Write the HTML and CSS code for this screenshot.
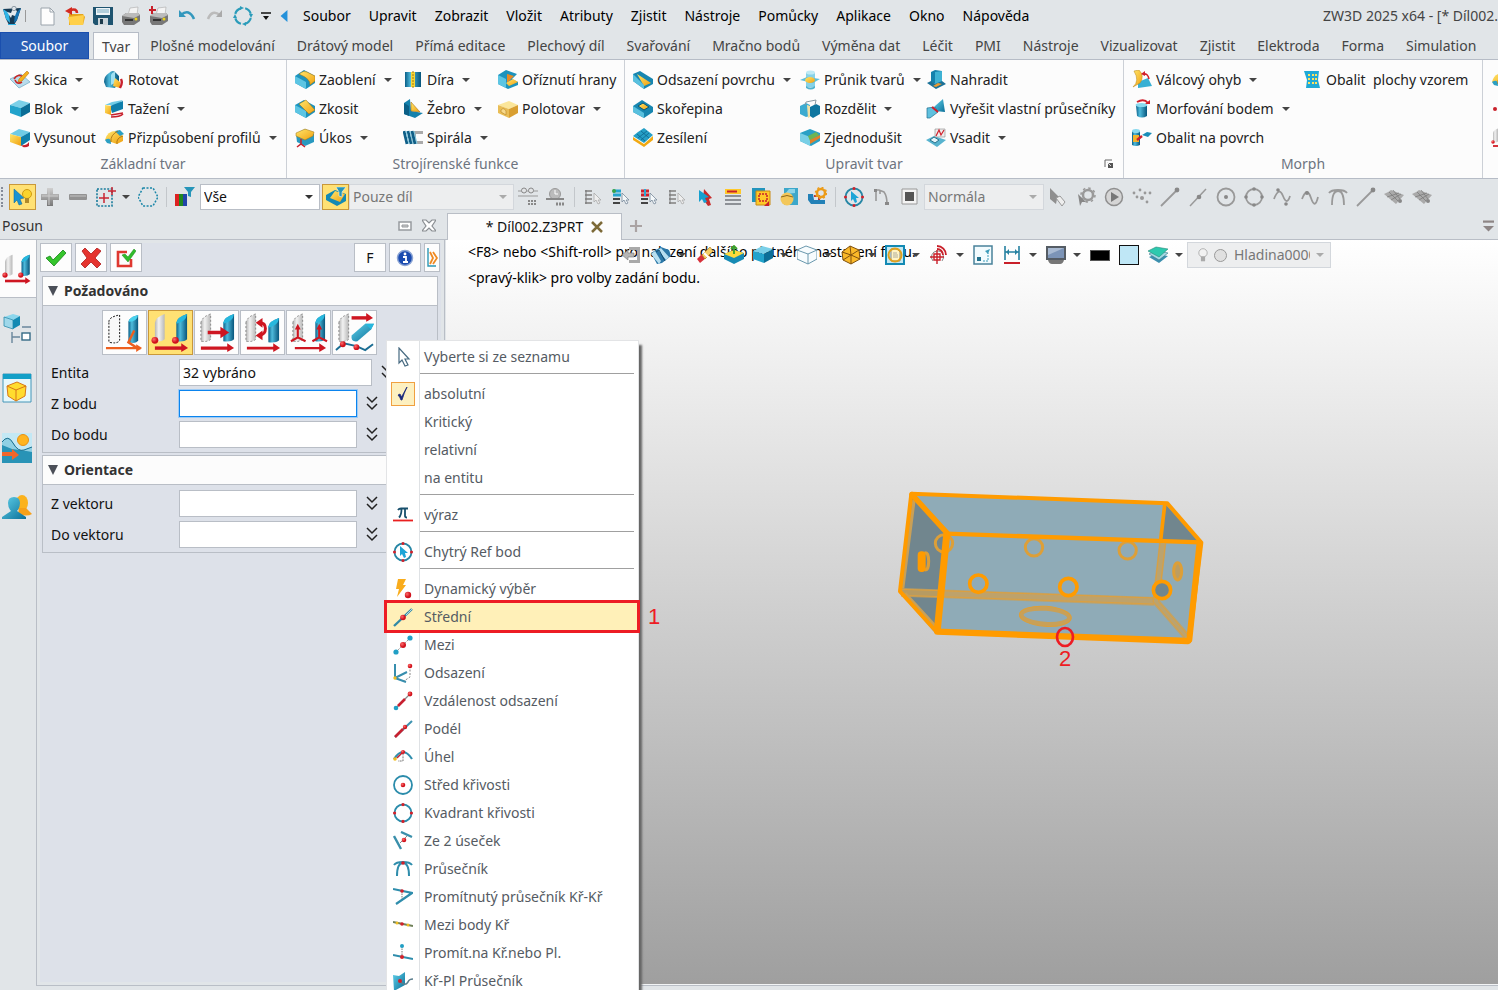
FILE: index.html
```html
<!DOCTYPE html>
<html lang="cs">
<head>
<meta charset="utf-8">
<title>ZW3D 2025 x64</title>
<link rel="stylesheet" href="styles.css">
</head>
<body>
<svg class="sprite" aria-hidden="true">
<defs>
<linearGradient id="gb" x1="0" y1="0" x2="1" y2="1"><stop offset="0" stop-color="#5fd0ea"/><stop offset="1" stop-color="#0b6f98"/></linearGradient>
<linearGradient id="gy" x1="0" y1="0" x2="1" y2="1"><stop offset="0" stop-color="#ffe66b"/><stop offset="1" stop-color="#f0a010"/></linearGradient>
<linearGradient id="gg" x1="0" y1="0" x2="1" y2="0"><stop offset="0" stop-color="#b5b5b5"/><stop offset=".4" stop-color="#f2f2f2"/><stop offset="1" stop-color="#b8b8b8"/></linearGradient>
<linearGradient id="gc" x1="0" y1="0" x2="1" y2="0"><stop offset="0" stop-color="#0a5f88"/><stop offset=".35" stop-color="#4fbbdc"/><stop offset="1" stop-color="#07557c"/></linearGradient>
<radialGradient id="gr" cx=".35" cy=".35" r=".8"><stop offset="0" stop-color="#ff6b6b"/><stop offset=".6" stop-color="#d0121c"/></radialGradient>
<linearGradient id="gk" x1="0" y1="0" x2="0" y2="1"><stop offset="0" stop-color="#d0d0d0"/><stop offset="1" stop-color="#777"/></linearGradient>

<symbol id="cube" viewBox="0 0 20 20"><path d="M0 6 9 1l11 3-9 5z" fill="#7bd0e8"/><path d="M0 6l11 3v9L0 14z" fill="#22a3cb"/><path d="M11 9l9-5v9l-9 5z" fill="#0b6e97"/></symbol>
<symbol id="extrude" viewBox="0 0 20 20"><path d="M0 6 9 1l11 3-9 5z" fill="#6fcbe6"/><path d="M0 6l11 3v9L0 14z" fill="url(#gy)"/><path d="M11 9l9-5v8l-9 6z" fill="#0f7fab"/><path d="M11 17q5 1 8-3v4q-3 2-6 1z" fill="#c8202c"/></symbol>
<symbol id="sketch" viewBox="0 0 20 20"><path d="M0 9l11-5 9 8-11 6z" fill="#b9dcec" stroke="#6fa9c4" stroke-width=".7"/><path d="M4 9q4-6 9-2M5 10q2 5 7 2" stroke="#c22" stroke-width="1.6" fill="none"/><path d="M9 9l8-8 2 2-7 8-4 1z" fill="#f5b01a" stroke="#a8650c" stroke-width=".5"/></symbol>
<symbol id="revolve" viewBox="0 0 20 20"><path d="M5 3q4-4 7 0l3 3v5l-4 7-9-1-2-5q0-6 5-9z" fill="url(#gc)"/><path d="M7 5q1-3 4-3v11l-4 2z" fill="#9fe0f2"/><path d="M11 8l5 4v6l-7-2z" fill="url(#gy)"/><path d="M17 9q2 4-1 9" stroke="#c8202c" stroke-width="2.4" fill="none"/></symbol>
<symbol id="sweep" viewBox="0 0 20 20"><path d="M1 6l7-3 11-2-6 5z" fill="#6fcbe6"/><path d="M6 7l13-5v8L8 14z" fill="#0f7fab"/><path d="M1 6l6 1v9l-6-2z" fill="url(#gy)"/><path d="M7 18q9 0 12-3M7 16l12-2" stroke="#c8202c" stroke-width="1.6" fill="none"/></symbol>
<symbol id="loft" viewBox="0 0 20 20"><path d="M1 12Q3 3 12 3l7 5v5l-6 3-6-2z" fill="url(#gy)"/><path d="M1 12q6-4 6 4l-4-1zM11 3l5-1 4 4-4 2z" fill="#2b9fc3"/><path d="M7 14q-1-7 7-11M13 16q-1-6 6-8" stroke="#a06a10" stroke-width=".8" fill="none"/></symbol>
<symbol id="fillet" viewBox="0 0 20 20"><path d="M0 6 9 0l11 6v7l-9 6-11-6z" fill="#1d93bd"/><path d="M0 6l11 6v7L0 13z" fill="#5cc5e3"/><path d="M4 4q5-4 8-2l8 4v5l-5 4q1-6-11-11z" fill="url(#gy)" stroke="#9c7312" stroke-width=".5"/></symbol>
<symbol id="chamfer" viewBox="0 0 20 20"><path d="M0 6 9 1l11 6v6l-9 6-11-6z" fill="#1d93bd"/><path d="M0 6l11 6v7L0 13z" fill="#5cc5e3"/><path d="M4 5l7-4 9 10-6 4z" fill="url(#gy)" stroke="#9c7312" stroke-width=".5"/></symbol>
<symbol id="draft" viewBox="0 0 20 20"><path d="M1 6l9-5 9 5v8l-9 4-8-4z" fill="#2899c0"/><path d="M1 5l9-4 9 3-1 4-8 4-9-4z" fill="url(#gy)" stroke="#9c7312" stroke-width=".5"/><path d="M6 11v5M2 19l4-3 4 3" stroke="#c8202c" stroke-width="1.5" fill="none"/></symbol>
<symbol id="hole" viewBox="0 0 20 20"><path d="M2 2h6v15H2zM12 2h6v15h-6z" fill="url(#gc)"/><path d="M8 2h4v15H8z" fill="#f7d537"/><path d="M10 1v17" stroke="#a07a12" stroke-dasharray="2 1"/></symbol>
<symbol id="rib" viewBox="0 0 20 20"><path d="M1 4l6-4 1 12 12 2-8 5L1 15z" fill="#1481ac"/><path d="M8 3l9 10-9-1z" fill="url(#gy)" stroke="#9a640e" stroke-width=".5"/><path d="M1 4l5 3v10l-5-2z" fill="#0b5f86"/></symbol>
<symbol id="thread" viewBox="0 0 20 20"><path d="M8 3h12v3h-7v7h7v3H8z" fill="#aaa"/><path d="M1 3l3 13M5 3l3 13M9 3l3 13" stroke="#0f5f88" stroke-width="2.8"/><path d="M3 3l3 13M7 3l3 13M11 3l3 13" stroke="#7fc7de" stroke-width="1"/></symbol>
<symbol id="trimedge" viewBox="0 0 20 20"><path d="M0 5 8 0l11 4-5 5 6 3v3l-10 4-10-5z" fill="#1d93bd"/><path d="M0 5l8 4v9l-8-4z" fill="#5cc5e3"/><path d="M9 4l7 2-5 5-2 2z" fill="#e98a24"/><path d="M8 13l7-4 5 3-9 4z" fill="url(#gy)"/></symbol>
<symbol id="stock" viewBox="0 0 20 20"><path d="M0 6l11-4 9 4-9 4z" fill="#fbe69a"/><path d="M0 6l11 4v9L0 14z" fill="#e9bd55"/><path d="M11 10l9-4v8l-9 5z" fill="#d99f31"/><path d="M3 13v-2q3-3 5 1v4z" fill="#f7d98a" stroke="#b68527" stroke-width=".6"/></symbol>
<symbol id="offset" viewBox="0 0 20 20"><path d="M0 4l7-3 13 8v5l-9 5L0 11z" fill="#1886b0"/><path d="M4 4l14 9-7 3z" fill="url(#gy)"/><path d="M0 4l11 11v4L0 11z" fill="#59c0de"/></symbol>
<symbol id="shell" viewBox="0 0 20 20"><path d="M0 7l9-6 11 7v5l-9 6-11-6z" fill="#1886b0"/><path d="M0 7l11 7v5L0 13z" fill="#59c0de"/><path d="M5 7l5-3 6 4-5 3z" fill="url(#gy)" stroke="#075777"/></symbol>
<symbol id="thicken" viewBox="0 0 20 20"><path d="M0 9l11 7 9-8v4l-9 7-11-7z" fill="#f2a912"/><path d="M0 8l5-4 6-4 9 7-9 8z" fill="#259fc6"/><path d="M4 6l8 7M8 3l8 7M5 10l9-7M8 12l8-7" stroke="#0b5f86" stroke-width=".7"/></symbol>
<symbol id="combine" viewBox="0 0 20 20"><path d="M6 3h9v14H6z" fill="#86d2e8"/><ellipse cx="10.500" cy="2.500" rx="4.500" ry="2" fill="#bfeaf5"/><path d="M0 10l7-3 13 2-7 4z" fill="#5dbedb"/><ellipse cx="10" cy="10" rx="5" ry="3" fill="url(#gy)"/><path d="M6 16q4 3 9 0v2q-4 3-9 0z" fill="#4fb2cf"/></symbol>
<symbol id="divide" viewBox="0 0 20 20"><path d="M0 7l6-3 4 2v11l-4 1-6-3z" fill="#3cabd0"/><path d="M10 8l6-3 4 2v8l-7 4-3-2z" fill="#0f76a0"/><path d="M5 6l1-3 10-2-1 5" fill="none" stroke="#8b9aa3"/><path d="M7 6l3 1v11l-2 1z" fill="#f1e0a4"/></symbol>
<symbol id="simplify" viewBox="0 0 20 20"><path d="M0 5l10-4 10 4v8l-9 5-11-5z" fill="#2aa0c5"/><path d="M0 5l10 4v9L0 13z" fill="#79cfe6"/><path d="M8 8l8-4 3 3-9 6z" fill="#6db553"/><path d="M10 12l10-5v3l-10 6z" fill="#e0812a"/></symbol>
<symbol id="replace" viewBox="0 0 20 20"><path d="M5 2l4-2 7 1v11l-7 2-4-2z" fill="#1481ac"/><path d="M9 2l7-1v11l-7 2z" fill="#3eb2d4"/><path d="M1 13l4-2 4 3 7-3 4 3-10 5z" fill="#1a7198"/><path d="M7 16l5-3 4 1-6 3z" fill="#e99a32"/></symbol>
<symbol id="selfx" viewBox="0 0 20 20"><path d="M9 7l8-7 2 13-10-1z" fill="url(#gb)"/><path d="M1 9l8-1 3 5-8 6H1z" fill="#5fc0de" stroke="#216e8f" stroke-width=".7"/><path d="M6 8l6 5" stroke="#d11f2b" stroke-width="2"/></symbol>
<symbol id="emboss" viewBox="0 0 20 20"><path d="M0 12l8-4 12 4-9 7z" fill="#57b3cf"/><path d="M4 12l4-3 5 3-4 3z" fill="#e4f4f9" stroke="#28728d"/><path d="M9 1h10v8H9z" fill="#eee" stroke="#888" stroke-width=".6"/><path d="M10 8l3-6 2 5 3-5" fill="none" stroke="#d11f2b" stroke-width="1.2"/></symbol>
<symbol id="bend" viewBox="0 0 20 20"><path d="M6 12l10-4 4 8-14 2z" fill="#38b0d4"/><path d="M2 1l5-1q6 6 1 13l-7 4q7-6 1-16z" fill="url(#gy)" stroke="#b98210" stroke-width=".5"/><path d="M11 4q5-1 6 5" fill="none" stroke="#d11f2b" stroke-width="1.6"/><path d="M9 4l4-3v5z" fill="#d11f2b"/></symbol>
<symbol id="morph" viewBox="0 0 20 20"><path d="M4 6h11v11q-5 3-10 0z" fill="url(#gc)"/><ellipse cx="9.500" cy="6" rx="6" ry="2" fill="#8ad9ee"/><path d="M5 3q7-4 11 1" fill="none" stroke="#d11f2b" stroke-width="2"/><path d="M13 5h5V1z" fill="#d11f2b"/></symbol>
<symbol id="wrap" viewBox="0 0 20 20"><path d="M0 3h8v14q-4 2-8 0z" fill="url(#gc)"/><ellipse cx="4" cy="3" rx="4" ry="2" fill="#8ad9ee"/><path d="M1 7h6v7H1z" fill="#f2b32d"/><path d="M5 12l5-4" stroke="#d11f2b" stroke-width="2.4"/><path d="M10 7l5-3 5 1-4 4z" fill="#1a8db8"/></symbol>
<symbol id="pattern" viewBox="0 0 20 20"><path d="M2 1h15l-1 9 2 8H4l1-8z" fill="#1fa9d6"/><path d="M6 4h2v2H6zM10 4h2v2h-2zM13 4h2v2h-2zM6 8h2v2H6zM10 8h2v2h-2zM13 8h2v2h-2zM6 12h2v2H6zM10 12h2v2h-2zM13 12h2v2h-2z" fill="#ffe25e"/></symbol>

<symbol id="logo" viewBox="0 0 20 20"><path d="M1 3l18-1-4 12-3 5H7l-3-6z" fill="#163a55"/><path d="M1 3l6 4 1 10-4-4z" fill="#2fb4e6"/><path d="M19 2l-6 6-1 9 3-3z" fill="#1674b4"/><path d="M5 6l4 1 2-5 4 3-2 5-3-1-1 3z" fill="#e4eaee"/><circle cx="12" cy="2.500" r="2.200" fill="#dde3e8" stroke="#5b6c78" stroke-width=".6"/><path d="M6 18h8v1H6z" fill="#2fb4e6"/></symbol>
<symbol id="new" viewBox="0 0 20 20"><path d="M4 2h9l4 4v13H4z" fill="#fdfdfd" stroke="#9aa3ab"/><path d="M13 2v4h4" fill="none" stroke="#9aa3ab"/></symbol>
<symbol id="open" viewBox="0 0 20 20"><path d="M4 8h14l2 3-2 8H4z" fill="#e5a51c"/><path d="M3 11l16-2-1 10H5z" fill="#ffd04a"/><path d="M12 7Q12 2 5 4" fill="none" stroke="#d32a20" stroke-width="2.6"/><path d="M0 5l7-4v8z" fill="#d32a20"/></symbol>
<symbol id="save" viewBox="0 0 20 20"><path d="M0 1h20v18H2l-2-2z" fill="#1f5470"/><path d="M3 2h14v7H3z" fill="#eef4f7"/><path d="M4 4h12M4 6h12" stroke="#76a9bf"/><path d="M5 12h10v7H5z" fill="#ccd5da"/><path d="M7 13h3v5H7z" fill="#1c394a"/></symbol>
<symbol id="print" viewBox="0 0 20 20"><path d="M7 9l2-7 8-1-1 8z" fill="#f3f3f3" stroke="#aaa" stroke-width=".6"/><path d="M1 10l4-3h12l2 2v6l-6 4H3l-2-3z" fill="#777"/><path d="M1 10l4-3h12l2 2-6 3z" fill="#bbb"/><path d="M4 14h8" stroke="#333" stroke-width="2"/><circle cx="15" cy="13" r="1.5" fill="#e9d21c"/></symbol>
<symbol id="undo" viewBox="0 0 20 20"><path d="M4 9q8-7 13 4" fill="none" stroke="#3498bd" stroke-width="2.6"/><path d="M2 4v7h7z" fill="#3498bd"/></symbol>
<symbol id="redo" viewBox="0 0 20 20"><path d="M15 9Q7 3 3 13" fill="none" stroke="#bbb" stroke-width="2.6"/><path d="M17 4v7h-6z" fill="#aaa"/></symbol>
<symbol id="regen" viewBox="0 0 20 20"><circle cx="10" cy="10" r="8" fill="none" stroke="#2b9cba" stroke-width="2.200" stroke-dasharray="8 4.566" stroke-dashoffset="-2"/><path d="M7 0v4l4-2zM20 8h-4l2 4zM13 20v-4l-4 2zM0 12h4l-2-4z" fill="#2b9cba"/></symbol>

<symbol id="pick" viewBox="0 0 20 20"><path d="M1 2l10 9-4 1 2 5-3 1-2-5-3 3z" fill="#1993d2" stroke="#0b6595" stroke-width=".5"/><circle cx="14" cy="7" r="4.500" fill="#fbd42c" stroke="#d09a12"/><path d="M12 11h4v5h-4z" fill="#b08a2a"/></symbol>
<symbol id="plus" viewBox="0 0 20 20"><path d="M7 1h6v6h6v6h-6v6H7v-6H1V7h6z" fill="url(#gk)"/><path d="M9 2v16M2 9h16" stroke="#ccc"/></symbol>
<symbol id="minus" viewBox="0 0 20 20"><rect x="1" y="7" width="18" height="6" rx="1" fill="#929292"/><path d="M2 9h16" stroke="#c4c4c4"/></symbol>
<symbol id="boxsel" viewBox="0 0 20 20"><path d="M1 2h15v17H1z" fill="none" stroke="#1a7c9c" stroke-width="1.6" stroke-dasharray="2 1.4"/><path d="M8 6v10M3 11h10M16 0v8M12 4h8" stroke="#c92530" stroke-width="1.5"/></symbol>
<symbol id="polysel" viewBox="0 0 20 20"><path d="M5 1h10l5 9-5 9H5L0 10z" fill="none" stroke="#1a86a8" stroke-width="1.5" stroke-dasharray="2 1.5"/></symbol>
<symbol id="colorfilter" viewBox="0 0 20 20"><path d="M0 7h4v12H0z" fill="#d22"/><path d="M4 7h4v12H4z" fill="#282"/><path d="M8 7h4v12H8z" fill="#24a"/><path d="M9 0h11l-4 5v5l-3-1V5z" fill="#2695b9"/></symbol>
<symbol id="partfilter" viewBox="0 0 20 20"><path d="M0 8l9-5 11 4v7l-9 5-11-6z" fill="#148ab4"/><path d="M4 11l5-7 10 3-5 8z" fill="url(#gy)"/><path d="M10 0h10l-4 5v5l-3-1V5z" fill="#2695b9" stroke="#fff" stroke-width=".5"/></symbol>
<symbol id="gear1" viewBox="0 0 20 20"><path d="M0 4h20M0 9h20" stroke="#999"/><circle cx="6" cy="3.500" r="2.500" fill="#e2e4e6" stroke="#888"/><circle cx="13" cy="3.500" r="2.500" fill="#e2e4e6" stroke="#888"/><path d="M10 14h9M10 17h9" stroke="#888" stroke-width="2" stroke-dasharray="2 1"/></symbol>
<symbol id="gear2" viewBox="0 0 20 20"><circle cx="9" cy="7" r="5.500" fill="#bbb" stroke="#999"/><path d="M9 3v4h3" stroke="#fff" fill="none"/><path d="M0 12h18" stroke="#888" stroke-width="2"/><path d="M10 17h9" stroke="#888" stroke-width="3" stroke-dasharray="2 1"/></symbol>
<symbol id="list0" viewBox="0 0 20 20"><path d="M2 4h7M2 8h7M2 12h7M2 16h7" stroke="#999" stroke-width="2"/><path d="M3 3v14" stroke="#777"/><path d="M11 6v9l2-2 2 4 2-1-2-3h3z" fill="#eee" stroke="#aaa" stroke-width=".8"/></symbol>
<symbol id="list1" viewBox="0 0 20 20"><path d="M2 4h8M2 8h8" stroke="#25a5cf" stroke-width="3"/><path d="M2 12h7M2 16h7" stroke="#444" stroke-width="2"/><circle cx="3" cy="4" r="2" fill="#39a54a"/><path d="M11 6v9l2-2 2 4 2-1-2-3h3z" fill="#f4f8fa" stroke="#789" stroke-width=".8"/></symbol>
<symbol id="list2" viewBox="0 0 20 20"><path d="M2 4h8M2 8h8" stroke="#d1202a" stroke-width="3"/><path d="M2 12h7M2 16h7" stroke="#444" stroke-width="2"/><path d="M6 2v7" stroke="#2aaad5" stroke-width="2"/><path d="M11 6v9l2-2 2 4 2-1-2-3h3z" fill="#f4f8fa" stroke="#789" stroke-width=".8"/></symbol>
<symbol id="cursors" viewBox="0 0 20 20"><path d="M9 2l8 9-3 1 2 6-3 1-5-7z" fill="#c82a2a"/><path d="M4 3v12l3-3 2 4 3-1-2-4 4-1z" fill="#16a0cf"/></symbol>
<symbol id="table" viewBox="0 0 20 20"><path d="M2 2h16v5H2z" fill="#ffc928"/><path d="M4 4.500h10" stroke="#c9202a" stroke-width="2"/><path d="M2 9h16M2 13h16M2 17h16" stroke="#8d9196" stroke-width="2"/></symbol>
<symbol id="layersel" viewBox="0 0 20 20"><path d="M1 1h13v14H1z" fill="#2294bc"/><path d="M5 4h14v14H5z" fill="#ffc928" stroke="#c98a12"/><path d="M8 7h8v7H8z" fill="none" stroke="#c9202a" stroke-width="1.500" stroke-dasharray="2 1"/><path d="M18 14v5h-5z" fill="#c9202a"/></symbol>
<symbol id="globe" viewBox="0 0 20 20"><path d="M5 1h14v17H5z" fill="#3ca7ca"/><path d="M6 7l4-5h6v4" fill="#8bd4e8"/><circle cx="8" cy="12" r="6.500" fill="#f3c75a"/><path d="M2 10q6-3 12 0" stroke="#8d681d" fill="none"/></symbol>
<symbol id="bendset" viewBox="0 0 20 20"><path d="M1 7h5l1 6h11v4H4l-3-4z" fill="#2281b7"/><path d="M7 9h5v4" stroke="#b8343a" stroke-width="2" fill="none"/><circle cx="14" cy="6" r="4" fill="none" stroke="#ec9b17" stroke-width="2.500"/><circle cx="14" cy="6" r="5.500" fill="none" stroke="#ec9b17" stroke-width="1.500" stroke-dasharray="2 2.300"/></symbol>
<symbol id="refpt" viewBox="0 0 20 20"><circle cx="10" cy="10" r="8.500" fill="none" stroke="#2686a5" stroke-width="1.800"/><path d="M7 4v10l2-2 2 4 2-1-1-4h3z" fill="#1ca5d7"/><g fill="#d3202a"><circle cx="10" cy="1.500" r="1.500"/><circle cx="10" cy="18.500" r="1.500"/><circle cx="1.500" cy="10" r="1.500"/><circle cx="18.500" cy="10" r="1.500"/></g></symbol>
<symbol id="hook" viewBox="0 0 20 20"><path d="M4 14V3h3l5 2q3 4 3 12M8 3v4" fill="none" stroke="#999" stroke-width="1.600"/><path d="M2 2h3v3H2zM13 15h4v3h-4z" fill="#888"/></symbol>
<symbol id="square" viewBox="0 0 20 20"><path d="M2 2h15v15H2z" fill="#f3f3f3" stroke="#999"/><path d="M5 5h9v9H5z" fill="#555"/></symbol>
<symbol id="curtag" viewBox="0 0 20 20"><path d="M2 1l11 11H9l-1 5-6-5z" fill="#8f8f8f"/><path d="M8 11l4-2 5 6-3 4z" fill="#eee" stroke="#999"/></symbol>
<symbol id="curgear" viewBox="0 0 20 20"><circle cx="12" cy="8" r="5" fill="none" stroke="#999" stroke-width="2.500"/><circle cx="12" cy="8" r="7" fill="none" stroke="#999" stroke-width="1.500" stroke-dasharray="2.500 3"/><path d="M2 7l8 8H6l-2 4z" fill="#888"/></symbol>
<symbol id="play" viewBox="0 0 20 20"><circle cx="10" cy="10" r="8.500" fill="#d5d5d5" stroke="#8f8f8f" stroke-width="1.500"/><path d="M7 5l8 5-8 5z" fill="#777"/></symbol>
<symbol id="dots" viewBox="0 0 20 20" fill="#999"><circle cx="2" cy="6" r="1.400"/><circle cx="8" cy="3" r="1.400"/><circle cx="5" cy="10" r="1.400"/><circle cx="10" cy="11" r="2"/><circle cx="13" cy="6" r="1.400"/><circle cx="18" cy="6" r="1.400"/><circle cx="15" cy="15" r="1.400"/></symbol>
<symbol id="gline" viewBox="0 0 20 20"><path d="M1 19L17 3" stroke="#999" stroke-width="1.800"/><circle cx="17" cy="3" r="2.400" fill="#888"/></symbol>
<symbol id="gmid" viewBox="0 0 20 20"><path d="M2 19L18 2" stroke="#999" stroke-width="1.500"/><circle cx="11" cy="10" r="2.300" fill="#888"/></symbol>
<symbol id="gcen" viewBox="0 0 20 20"><circle cx="10" cy="10" r="8.500" fill="none" stroke="#999" stroke-width="1.800"/><circle cx="10" cy="10" r="2" fill="#888"/></symbol>
<symbol id="gquad" viewBox="0 0 20 20"><circle cx="10" cy="10" r="8" fill="none" stroke="#999" stroke-width="1.800"/><g fill="#888"><circle cx="10" cy="2" r="1.800"/><circle cx="10" cy="18" r="1.800"/><circle cx="2" cy="10" r="1.800"/><circle cx="18" cy="10" r="1.800"/></g></symbol>
<symbol id="gwave" viewBox="0 0 20 20"><path d="M2 12Q7-1 11 9t7 0" fill="none" stroke="#999" stroke-width="1.800"/><circle cx="6" cy="3" r="1.800" fill="#888"/><circle cx="14" cy="17" r="1.800" fill="#888"/></symbol>
<symbol id="gwave2" viewBox="0 0 20 20"><path d="M2 12Q7-1 11 11t7-1" fill="none" stroke="#999" stroke-width="1.800"/><circle cx="7" cy="6" r="2" fill="#888"/></symbol>
<symbol id="gint" viewBox="0 0 20 20"><path d="M1 6q2-3 9-3t9 3M4 18Q4 4 10 4t6 14" fill="none" stroke="#999" stroke-width="1.800"/></symbol>
<symbol id="gsurf" viewBox="0 0 20 20"><path d="M0 7q5-2 7-4l13 5-8 9z" fill="#aaa"/><path d="M5 5l9 9M9 3l7 9M3 10l12-4M7 13l10-6" stroke="#777" stroke-width=".7"/><circle cx="16" cy="14" r="2" fill="#888"/></symbol>

<symbol id="mvA" viewBox="0 0 40 40"><path d="M4 9q0-5 11-7v26q-2 4-11 2z" fill="#f8f8f8" stroke="#111" stroke-dasharray="2 1.500"/><path d="M24 9q1-5 10-7v26q-2 4-10 2z" fill="url(#gc)"/><path d="M24 9q1-5 10-7-1 7-10 7z" fill="#48d1ee"/><path d="M1 36h32l-9-6 6-12" fill="none" stroke="#ed5f1e" stroke-width="2.500"/><path d="M32 32l6 4-6 4z" fill="#ed5f1e"/></symbol>
<symbol id="mvB" viewBox="0 0 40 40"><path d="M4 10q1-6 10-9v26q-3 3-10 2z" fill="url(#gg)"/><path d="M26 10q1-6 11-9v26q-3 3-11 2z" fill="url(#gc)"/><path d="M26 10q1-6 11-9-1 8-11 10z" fill="#27b7dd"/><circle cx="4" cy="28" r="3.500" fill="url(#gr)"/><circle cx="25" cy="28" r="3.500" fill="url(#gr)"/><path d="M4 36h29" stroke="#ce1621" stroke-width="3.500"/><path d="M31 31l7 5-7 4z" fill="#ce1621"/></symbol>
<symbol id="mvC" viewBox="0 0 40 40"><path d="M4 10q1-6 10-9v26q-3 3-10 2z" fill="url(#gg)" stroke="#888" stroke-dasharray="2 2"/><path d="M27 10q1-6 11-9v26q-3 3-11 2z" fill="url(#gc)"/><path d="M27 10q1-6 11-9-1 8-11 10z" fill="#27b7dd"/><path d="M11 20h15M4 36h29" stroke="#ce1621" stroke-width="3.500"/><path d="M24 14l9 6-9 6zM31 31l7 5-7 4z" fill="#ce1621"/></symbol>
<symbol id="mvD" viewBox="0 0 40 40"><path d="M3 10q1-6 10-9v26q-3 3-10 2z" fill="url(#gg)" stroke="#888" stroke-dasharray="2 2"/><path d="M26 14q1-6 11-9v23q-3 3-11 2z" fill="url(#gc)"/><path d="M26 14q1-6 11-9-1 8-11 10z" fill="#27b7dd"/><path d="M17 10q6 0 6 6t-6 7M4 36h29" stroke="#ce1621" stroke-width="3" fill="none"/><path d="M20 5v10l-7-5zM20 18v10l-7-5zM31 31l7 5-7 4z" fill="#ce1621"/></symbol>
<symbol id="mvE" viewBox="0 0 40 40"><path d="M4 10q1-6 10-9v26q-3 3-10 2z" fill="url(#gg)" stroke="#888" stroke-dasharray="2 2"/><path d="M27 10q1-6 10-9v26q-3 3-10 2z" fill="url(#gc)"/><path d="M27 10q1-6 10-9-1 8-10 10z" fill="#27b7dd"/><path d="M9 14v11l-7 4M9 25l8 4M31 14v11l-7 4M31 25l8 4M6 36h27" stroke="#ce1621" stroke-width="2.200" fill="none"/><path d="M6 17l3-6 3 6zM28 17l3-6 3 6zM31 31l7 5-7 4z" fill="#ce1621"/></symbol>
<symbol id="mvF" viewBox="0 0 40 40"><path d="M4 10q1-6 10-9v26q-3 3-10 2z" fill="url(#gg)" stroke="#888" stroke-dasharray="2 2"/><path d="M17 23l14-12 9 0-3 6-14 12q-7 1-6-6z" fill="url(#gb)"/><path d="M31 11h9l-3 6z" fill="#27b7dd"/><path d="M17 5h16" stroke="#ce1621" stroke-width="3.500"/><path d="M32 0l7 5-7 4z" fill="#ce1621"/><path d="M1 38l8-7 13 3 9 4 8-6" stroke="#1b6d93" stroke-width="2" fill="none"/><circle cx="8" cy="32" r="3" fill="url(#gr)"/><circle cx="22" cy="35" r="3" fill="url(#gr)"/></symbol>

<symbol id="tree" viewBox="0 0 30 30"><path d="M2 4l9-3 7 2-7 4z" fill="#8bd6ec"/><path d="M2 4l9 3v9l-9-3z" fill="#9fd8ea" stroke="#1781a5" stroke-width=".7"/><path d="M11 7l7-4v9l-7 4z" fill="#128ab3"/><path d="M20 14h9M10 19v11M10 24h8" stroke="#69879c" stroke-width="1.400" fill="none"/><rect x="20" y="20" width="8" height="7" fill="#fff" stroke="#356b86" stroke-width="1.400"/></symbol>
<symbol id="view" viewBox="0 0 30 30"><path d="M1 1h28v28H1z" fill="#e6f7fb" stroke="#4496b8"/><path d="M1 1h28v5H1z" fill="#139fc7"/><path d="M5 13l10-4 9 4-1 10-9 5-8-5z" fill="#ffdc2e" stroke="#d77718"/><path d="M5 13l9 4 10-4M14 17v11" stroke="#d77718" fill="none"/></symbol>
<symbol id="scene" viewBox="0 0 30 30"><path d="M0 0h30v30H0z" fill="#c3e8f4"/><path d="M0 9q6-8 11 1t11 7l8-3v16H0z" fill="#2893b6"/><path d="M0 9q6-8 11 1t11 7l8-3v5q-10-2-20-3L0 12z" fill="#8fd0e4"/><path d="M0 9q6-8 11 1t11 7l8-3" fill="none" stroke="#1b6d8c"/><circle cx="21" cy="7" r="5.500" fill="#ffb41f" stroke="#e79014"/><path d="M0 19h10v-3l7 6-7 5v-4H0z" fill="#f1662a"/></symbol>
<symbol id="user" viewBox="0 0 30 30"><ellipse cx="20" cy="10" rx="6" ry="8" fill="#fbb21c"/><path d="M17 15h7l6 6q-5 3-14 0z" fill="#f6a018"/><path d="M6 10q0-6 6-6t6 6q0 5-3 8l9 6v2H0v-2l9-6q-3-3-3-8z" fill="url(#gb)"/></symbol>

<symbol id="exit" viewBox="0 0 20 20"><path d="M7 2h11v16H7v-3h8V5H7z" fill="#a9a9a9"/><path d="M0 10l6-5v3h6v4H6v3z" fill="#b5b5b5" stroke="#777" stroke-width=".6"/></symbol>
<symbol id="book" viewBox="0 0 20 20"><path d="M0 8l10-6 8 3 2 6-9 7-5 1z" fill="#2c78a8"/><path d="M0 9l4-3 6 10-2 3zM7 5l3-2 8 9-3 3z" fill="#b7dff0"/><path d="M5 7l3-2 6 11" stroke="#124c70" fill="none"/></symbol>
<symbol id="brush" viewBox="0 0 20 20"><path d="M2 14l5-5 4 4-6 5z" fill="#d6303a"/><path d="M7 10l8-8 3 4-8 8z" fill="#f6cf67" stroke="#b58122" stroke-width=".7"/><path d="M9 8l4 4" stroke="#fff" stroke-width="2"/></symbol>
<symbol id="plane" viewBox="0 0 20 20"><path d="M0 9l10-4 10 3v6l-10 5-10-5z" fill="#178bb4"/><path d="M0 9l10-4 10 3-10 5z" fill="#ffd93c"/><path d="M10 1v8M7 4l3-3 3 3" stroke="#3ba12b" stroke-width="1.800" fill="none"/></symbol>
<symbol id="wire" viewBox="0 0 20 20"><path d="M0 5l9-4 11 4v9l-9 5-11-5z" fill="#f7fcfe" stroke="#6a98ad"/><path d="M0 5l11 4 9-4M11 9v10" fill="none" stroke="#6a98ad"/></symbol>
<symbol id="mesh" viewBox="0 0 20 20"><path d="M1 7l8-6 9 4 1 9-9 5-8-4z" fill="#fbb929" stroke="#80510f"/><path d="M1 7l9 3 8-5M10 10v9M9 1l1 9-8 5M10 10l9 4" stroke="#80510f" fill="none"/></symbol>
<symbol id="fit" viewBox="0 0 20 20"><path d="M1 1h18v18H1z" fill="#c4e8f2" stroke="#138ab4" stroke-width="2"/><path d="M6 4h6l3 3v9H6z" fill="#fff3c4" stroke="#888"/><path d="M8 8h4M8 10h5M8 12h5" stroke="#999" stroke-width=".8"/><circle cx="10" cy="10" r="6.500" fill="none" stroke="#e2a21d" stroke-width="2"/></symbol>
<symbol id="target" viewBox="0 0 20 20"><path d="M4 16a6 6 0 0 1 4-10a6 6 0 0 1 5 10" fill="none" stroke="#888"/><path d="M8 1a9 9 0 0 1 9 9M8 4a6 6 0 0 1 6 6" fill="none" stroke="#c9202a" stroke-width="1.800"/><path d="M8 5v14M1 12h14M5 9h6v6H5z" stroke="#c9202a" stroke-width="1.400" fill="none"/></symbol>
<symbol id="window" viewBox="0 0 20 20"><path d="M1 1h18v18H1z" fill="#f2fbfe" stroke="#49829b" stroke-width="1.500"/><path d="M4 12h4v4H4z" fill="#23738f"/><path d="M10 16h5V8" stroke="#3c9cba" fill="none" stroke-dasharray="2 1"/><path d="M12 6l5-2-2 5z" fill="#3c9cba"/></symbol>
<symbol id="dim" viewBox="0 0 20 20"><path d="M3 1v14M17 1v14M3 7h14" stroke="#2681a1" stroke-width="1.600"/><path d="M2 18h16" stroke="#c9202a" stroke-width="2"/><path d="M4 7l3-3v6zM16 7l-3-3v6z" fill="#2681a1"/></symbol>
<symbol id="monitor" viewBox="0 0 20 20"><path d="M0 1h20v14H0z" fill="#555c64"/><path d="M2 3h16v10H2z" fill="#7c94b7"/><path d="M2 3h16L2 10z" fill="#a9bad2"/><path d="M2 15h16q-1 4-4 4H6q-3 0-4-4z" fill="#777"/></symbol>
<symbol id="layers" viewBox="0 0 20 20"><path d="M1 12l7-3 12 2-9 7z" fill="#3b8fae"/><path d="M1 9l7-4 12 3-9 7z" fill="#a4d9e3" stroke="#34778a" stroke-width=".6"/><path d="M0 6l8-4 12 2-9 8z" fill="#2dc9ae" stroke="#26897a" stroke-width=".6"/></symbol>
<symbol id="bulb" viewBox="0 0 20 20"><circle cx="10" cy="7" r="6" fill="#f2f2f2" stroke="#999"/><path d="M7 12h6v7H7z" fill="#aaa"/></symbol>

<symbol id="mArrow" viewBox="0 0 20 20"><path d="M6 1v15l3-3 3 6 3-1-3-6h4z" fill="#fff" stroke="#476a81" stroke-width="1.200"/></symbol>
<symbol id="mCheck" viewBox="0 0 20 20"><path d="M5 11l2-1 1.500 3L14 3q-3 6-5 13H8q-1-3-3-5z" fill="#1b2a7c" stroke="#1b2a7c" stroke-width=".8"/></symbol>
<symbol id="mPi" viewBox="0 0 20 20"><path d="M5 5q1-1.500 3-1.500h7M8.500 4q0 6-2.500 8.500M12 4v7q0 1.500 2 1.500" stroke="#174f6c" stroke-width="1.800" fill="none"/><path d="M0 15.500h20" stroke="#e92020" stroke-width="1.800"/></symbol>
<symbol id="mBolt" viewBox="0 0 20 20"><path d="M5 0h8l-3 6h3L4 18l2-8H3z" fill="#f9ac1c"/><circle cx="15" cy="16" r="3.200" fill="url(#gr)"/></symbol>
<symbol id="mMid" viewBox="0 0 20 20"><path d="M1 19L19 2" stroke="#2f88a6" stroke-width="2.400"/><path d="M13 8l6-6" stroke="#d8eef4" stroke-width=".8"/><circle cx="10" cy="10.500" r="2.800" fill="url(#gr)"/></symbol>
<symbol id="mBetween" viewBox="0 0 20 20"><path d="M3 17L17 3" stroke="#999" stroke-dasharray="2 1"/><circle cx="3" cy="17" r="2.600" fill="#219fc5"/><circle cx="17" cy="3" r="2.600" fill="#219fc5"/><circle cx="10" cy="10" r="3" fill="url(#gr)"/></symbol>
<symbol id="mOffset" viewBox="0 0 20 20"><path d="M2 1v14l11 4M2 15l12-6" stroke="#378eae" stroke-width="2" fill="none"/><path d="M17 3v11l-6 4" stroke="#888" stroke-dasharray="2 1.500" fill="none"/><circle cx="17" cy="3" r="2.300" fill="url(#gr)"/><circle cx="2" cy="15" r="1.700" fill="#f1bd23"/></symbol>
<symbol id="mDist" viewBox="0 0 20 20"><path d="M3 17L17 3" stroke="#888" stroke-width="1.200"/><path d="M5 15l7-7" stroke="#c72030" stroke-width="2.600"/><circle cx="3" cy="17" r="2.300" fill="#219fc5"/><circle cx="17" cy="3" r="2.400" fill="url(#gr)"/></symbol>
<symbol id="mAlong" viewBox="0 0 20 20"><path d="M2 18L19 2" stroke="#3d93b0" stroke-width="2"/><path d="M2 18l8-8" stroke="#c72030" stroke-width="2.600"/><circle cx="12" cy="8" r="2.200" fill="url(#gr)"/></symbol>
<symbol id="mAngle" viewBox="0 0 20 20"><path d="M1 12q9-14 18 0" stroke="#2f8dac" stroke-width="2.200" fill="none"/><path d="M2 12l8-7v9H5" stroke="#777" stroke-dasharray="2 1" fill="none"/><path d="M4 11l6-6" stroke="#c72030" stroke-width="1.500"/><circle cx="10" cy="5" r="2" fill="url(#gr)"/><circle cx="2" cy="12" r="1.800" fill="#f1bd23"/></symbol>
<symbol id="mCenter" viewBox="0 0 20 20"><circle cx="10" cy="10" r="9" fill="none" stroke="#2b8cab" stroke-width="1.800"/><circle cx="10" cy="10" r="2.300" fill="url(#gr)"/></symbol>
<symbol id="mQuad" viewBox="0 0 20 20"><circle cx="10" cy="10" r="8.500" fill="none" stroke="#2b8cab" stroke-width="1.800"/><g fill="#d3202a"><circle cx="10" cy="1.600" r="1.600"/><circle cx="10" cy="18.400" r="1.600"/><circle cx="1.600" cy="10" r="1.600"/><circle cx="18.400" cy="10" r="1.600"/></g></symbol>
<symbol id="mTwo" viewBox="0 0 20 20"><path d="M1 5l7 13M8 1l11 5" stroke="#3a8fab" stroke-width="2.400"/><path d="M7 12l7-7" stroke="#888"/><circle cx="11" cy="9" r="2.300" fill="url(#gr)"/></symbol>
<symbol id="mInt" viewBox="0 0 20 20"><path d="M1 6q2-3 9-3t9 3M4 17Q4 4 10 4t6 13" fill="none" stroke="#2f8dac" stroke-width="2"/><circle cx="10" cy="4" r="1.800" fill="#d3202a"/></symbol>
<symbol id="mProj" viewBox="0 0 20 20"><path d="M0 2l19 4L3 17" stroke="#2f8dac" stroke-width="2.200" fill="none"/><path d="M9 4v8" stroke="#777" stroke-dasharray="1.500 1"/><circle cx="9" cy="4" r="1.800" fill="#d3202a"/></symbol>
<symbol id="mCrv" viewBox="0 0 20 20"><path d="M0 7l20 4" stroke="#6f8058" stroke-width="2.200"/><circle cx="4" cy="8" r="1.500" fill="#f1bd23"/><circle cx="15" cy="10" r="1.500" fill="#f1bd23"/><circle cx="9" cy="9" r="1.800" fill="#d3202a"/></symbol>
<symbol id="mProjOn" viewBox="0 0 20 20"><path d="M0 12l20 4" stroke="#2f8dac" stroke-width="2.200"/><path d="M9 3v11" stroke="#777" stroke-dasharray="1.500 1"/><circle cx="9" cy="3" r="2" fill="#219fc5"/><circle cx="9" cy="14" r="2" fill="#d3202a"/></symbol>
<symbol id="mPl" viewBox="0 0 20 20"><path d="M0 4l6 1 6-4v13L1 20z" fill="url(#gb)"/><path d="M7 10q5 6 8 1 1-3 5-3" stroke="#5c7f8e" stroke-width="1.500" fill="none"/><circle cx="7" cy="10" r="2" fill="#d3202a"/></symbol>

<symbol id="chev" viewBox="0 0 12 15"><path d="M1 1l5 5 5-5M1 8l5 5 5-5" fill="none" stroke="#222" stroke-width="1.500"/></symbol>
<symbol id="ok" viewBox="0 0 20 20"><path d="M0 10l4-2 3 4L17 2l3 3L8 18z" fill="#35c52c" stroke="#168419" stroke-width=".8"/></symbol>
<symbol id="cancel" viewBox="0 0 20 20"><path d="M1 3l3-3 6 6 6-6 4 3-6 7 6 6-4 4-6-6-6 6-4-4 6-6z" fill="#e5342f" stroke="#ae1b1c" stroke-width=".8"/></symbol>
<symbol id="apply" viewBox="0 0 20 20"><path d="M15 11v7H2V4h9" fill="none" stroke="#df3830" stroke-width="2.600"/><path d="M6 7l3-1 3 3 6-8 2 2-8 11z" fill="#31bd2b" stroke="#168419" stroke-width=".5"/></symbol>
<symbol id="info" viewBox="0 0 20 20"><circle cx="10" cy="10" r="7.500" fill="#1a4bb0" stroke="#8ba4d4" stroke-width="1.500"/><path d="M8 9h3v5M8 14h5" stroke="#fff" stroke-width="1.800" fill="none"/><circle cx="10" cy="6" r="1.400" fill="#fff"/></symbol>
<symbol id="expand" viewBox="0 0 12 20"><path d="M2 0v18h8" fill="none" stroke="#2d96b5" stroke-width="1.400"/><path d="M4 4l3 6-3 6M7 4l4 6-4 6" fill="none" stroke="#f08a22" stroke-width="1.800"/></symbol>
</defs>
</svg>

<header class="titlebar">
  <div class="quick">
    <svg class="icon logo"><use href="#logo"/></svg><span class="sep"></span>
    <button aria-label="Nový"><svg class="icon"><use href="#new"/></svg></button>
    <button aria-label="Otevřít"><svg class="icon"><use href="#open"/></svg></button>
    <button aria-label="Uložit"><svg class="icon"><use href="#save"/></svg></button>
    <button aria-label="Tisk"><svg class="icon"><use href="#print"/></svg></button>
    <button aria-label="Rychlý tisk"><svg class="icon" viewBox="0 0 20 20"><use href="#print"/><path d="M3 0v8M0 4h7" stroke="#c9202a" stroke-width="2"/></svg></button>
    <button aria-label="Zpět"><svg class="icon"><use href="#undo"/></svg></button>
    <button aria-label="Znovu"><svg class="icon"><use href="#redo"/></svg></button>
    <button aria-label="Regenerovat"><svg class="icon"><use href="#regen"/></svg></button>
    <button class="slim" aria-label="Přizpůsobit"><svg class="mini" viewBox="0 0 12 12"><path d="M1 3h10" stroke="#111" stroke-width="1.500"/><path d="M3 6h6L6 10z" fill="#111"/></svg></button>
    <button class="slim" aria-label="Sbalit"><svg class="mini" viewBox="0 0 10 14"><path d="M9 0v14L1 7z" fill="#2491da"/></svg></button>
  </div>
  <nav class="menubar">
    <button>Soubor</button><button>Upravit</button><button>Zobrazit</button><button>Vložit</button><button>Atributy</button><button>Zjistit</button><button>Nástroje</button><button>Pomůcky</button><button>Aplikace</button><button>Okno</button><button>Nápověda</button>
  </nav>
  <div class="caption">ZW3D 2025 x64 - [* Díl002.</div>
</header>

<nav class="tabs">
  <button class="file">Soubor</button><button class="active">Tvar</button><button>Plošné modelování</button><button>Drátový model</button><button>Přímá editace</button><button>Plechový díl</button><button>Svařování</button><button>Mračno bodů</button><button>Výměna dat</button><button>Léčit</button><button>PMI</button><button>Nástroje</button><button>Vizualizovat</button><button>Zjistit</button><button>Elektroda</button><button>Forma</button><button>Simulation</button><button>A</button>
</nav>

<section class="ribbon">
  <div class="group g1">
    <div class="cols">
      <div class="col">
        <button><svg class="icon"><use href="#sketch"/></svg>Skica<i class="dd"></i></button>
        <button><svg class="icon"><use href="#cube"/></svg>Blok<i class="dd"></i></button>
        <button><svg class="icon"><use href="#extrude"/></svg>Vysunout</button>
      </div>
      <div class="col">
        <button><svg class="icon"><use href="#revolve"/></svg>Rotovat</button>
        <button><svg class="icon"><use href="#sweep"/></svg>Tažení<i class="dd"></i></button>
        <button><svg class="icon"><use href="#loft"/></svg>Přizpůsobení profilů<i class="dd"></i></button>
      </div>
    </div>
    <div class="glabel">Základní tvar</div>
  </div>
  <div class="group g2">
    <div class="cols">
      <div class="col">
        <button><svg class="icon"><use href="#fillet"/></svg>Zaoblení<i class="dd"></i></button>
        <button><svg class="icon"><use href="#chamfer"/></svg>Zkosit</button>
        <button><svg class="icon"><use href="#draft"/></svg>Úkos<i class="dd"></i></button>
      </div>
      <div class="col">
        <button><svg class="icon"><use href="#hole"/></svg>Díra<i class="dd"></i></button>
        <button><svg class="icon"><use href="#rib"/></svg>Žebro<i class="dd"></i></button>
        <button><svg class="icon"><use href="#thread"/></svg>Spirála<i class="dd"></i></button>
      </div>
      <div class="col">
        <button><svg class="icon"><use href="#trimedge"/></svg>Oříznutí hrany</button>
        <button><svg class="icon"><use href="#stock"/></svg>Polotovar<i class="dd"></i></button>
      </div>
    </div>
    <div class="glabel">Strojírenské funkce</div>
  </div>
  <div class="group g3">
    <div class="cols">
      <div class="col">
        <button><svg class="icon"><use href="#offset"/></svg>Odsazení povrchu<i class="dd"></i></button>
        <button><svg class="icon"><use href="#shell"/></svg>Skořepina</button>
        <button><svg class="icon"><use href="#thicken"/></svg>Zesílení</button>
      </div>
      <div class="col">
        <button><svg class="icon"><use href="#combine"/></svg>Průnik tvarů<i class="dd"></i></button>
        <button><svg class="icon"><use href="#divide"/></svg>Rozdělit<i class="dd"></i></button>
        <button><svg class="icon"><use href="#simplify"/></svg>Zjednodušit</button>
      </div>
      <div class="col">
        <button><svg class="icon"><use href="#replace"/></svg>Nahradit</button>
        <button><svg class="icon"><use href="#selfx"/></svg>Vyřešit vlastní průsečníky</button>
        <button><svg class="icon"><use href="#emboss"/></svg>Vsadit<i class="dd"></i></button>
      </div>
    </div>
    <div class="glabel"><span>Upravit tvar</span><button class="launch" aria-label="Možnosti"><svg class="mini" viewBox="0 0 12 12"><path d="M2 9V2h7" fill="none" stroke="#666"/><path d="M5 5h5v5H5z" fill="#555"/><path d="M4 4l4 4" stroke="#ddd"/></svg></button></div>
  </div>
  <div class="group g4">
    <div class="cols">
      <div class="col">
        <button><svg class="icon"><use href="#bend"/></svg>Válcový ohyb<i class="dd"></i></button>
        <button><svg class="icon"><use href="#morph"/></svg>Morfování bodem<i class="dd"></i></button>
        <button><svg class="icon"><use href="#wrap"/></svg>Obalit na povrch</button>
      </div>
      <div class="col">
        <button><svg class="icon"><use href="#pattern"/></svg>Obalit&nbsp; plochy vzorem</button>
      </div>
    </div>
    <div class="glabel">Morph</div>
  </div>
  <div class="group g5">
    <div class="cols">
      <div class="col">
        <button aria-label="Pole"><svg class="icon"><use href="#loft"/></svg></button>
        <button aria-label="Bod"><svg class="icon" viewBox="0 0 20 20"><circle cx="4" cy="10" r="2" fill="#c9202a"/></svg></button>
        <button aria-label="Posun"><svg class="icon" viewBox="0 0 40 40"><use href="#mvB"/></svg></button>
      </div>
    </div>
  </div>
</section>

<section class="toolbar">
  <span class="grip"></span>
  <button class="on" aria-label="Výběr"><svg class="icon"><use href="#pick"/></svg></button>
  <button aria-label="Přidat"><svg class="icon"><use href="#plus"/></svg></button>
  <button aria-label="Odebrat"><svg class="icon"><use href="#minus"/></svg></button>
  <button aria-label="Oknem"><svg class="icon"><use href="#boxsel"/></svg></button>
  <i class="dd tight"></i>
  <button aria-label="Polygonem"><svg class="icon"><use href="#polysel"/></svg></button>
  <span class="sep"></span>
  <button aria-label="Filtr barvy"><svg class="icon"><use href="#colorfilter"/></svg></button>
  <label class="combo c1"><select aria-label="Filtr"><option>Vše</option></select></label>
  <button class="on" aria-label="Filtr dílu"><svg class="icon"><use href="#partfilter"/></svg></button>
  <label class="combo c2 off"><select aria-label="Rozsah" disabled><option>Pouze díl</option></select></label>
  <button aria-label="Ref 1"><svg class="icon"><use href="#gear1"/></svg></button>
  <button aria-label="Ref 2"><svg class="icon"><use href="#gear2"/></svg></button>
  <span class="sep"></span>
  <button aria-label="Seznam"><svg class="icon"><use href="#list0"/></svg></button>
  <button aria-label="Seznam 1"><svg class="icon"><use href="#list1"/></svg></button>
  <button aria-label="Seznam 2"><svg class="icon"><use href="#list2"/></svg></button>
  <button aria-label="Seznam 3"><svg class="icon"><use href="#list0"/></svg></button>
  <button aria-label="Kurzory"><svg class="icon"><use href="#cursors"/></svg></button>
  <button aria-label="Tabulka"><svg class="icon"><use href="#table"/></svg></button>
  <button aria-label="Vrstvy"><svg class="icon"><use href="#layersel"/></svg></button>
  <button aria-label="Svět"><svg class="icon"><use href="#globe"/></svg></button>
  <button aria-label="Nastavení"><svg class="icon"><use href="#bendset"/></svg></button>
  <span class="sep"></span>
  <button aria-label="Ref bod"><svg class="icon"><use href="#refpt"/></svg></button>
  <button aria-label="Hák"><svg class="icon"><use href="#hook"/></svg></button>
  <button aria-label="Čtverec"><svg class="icon"><use href="#square"/></svg></button>
  <label class="combo c3 off"><select aria-label="Směr" disabled><option>Normála</option></select></label>
  <button aria-label="Štítek"><svg class="icon"><use href="#curtag"/></svg></button>
  <button aria-label="Volby"><svg class="icon"><use href="#curgear"/></svg></button>
  <button aria-label="Spustit"><svg class="icon"><use href="#play"/></svg></button>
  <button aria-label="Body"><svg class="icon"><use href="#dots"/></svg></button>
  <button aria-label="Konec"><svg class="icon"><use href="#gline"/></svg></button>
  <button aria-label="Střed"><svg class="icon"><use href="#gmid"/></svg></button>
  <button aria-label="Střed kružnice"><svg class="icon"><use href="#gcen"/></svg></button>
  <button aria-label="Kvadrant"><svg class="icon"><use href="#gquad"/></svg></button>
  <button aria-label="Vlna"><svg class="icon"><use href="#gwave"/></svg></button>
  <button aria-label="Vlna 2"><svg class="icon"><use href="#gwave2"/></svg></button>
  <button aria-label="Průsečík"><svg class="icon"><use href="#gint"/></svg></button>
  <button aria-label="Přímka"><svg class="icon"><use href="#gline"/></svg></button>
  <button aria-label="Plocha"><svg class="icon"><use href="#gsurf"/></svg></button>
  <button aria-label="Plocha 2"><svg class="icon"><use href="#gsurf"/></svg></button>
</section>

<main class="work">
  <aside class="dock">
    <div class="dockhead"><span>Posun</span>
      <svg class="hicon" viewBox="0 0 14 14"><path d="M1 3h12v8H1z" fill="#fff" stroke="#969a9e" stroke-width="1.500"/><path d="M4 6h6v2H4z" fill="#ccc" stroke="#969a9e"/></svg>
      <svg class="hicon" viewBox="0 0 14 14"><path d="M0 1h4l3 3 3-3h4l-4 6 4 5h-4L7 9l-3 3H0l4-5z" fill="#fff" stroke="#8a8e92" stroke-width="1.200"/></svg>
    </div>
    <div class="dockbody">
      <div class="rail">
        <button class="sel" aria-label="Posun"><svg class="icon32" viewBox="0 0 40 40"><use href="#mvB"/></svg></button>
        <button aria-label="Strom"><svg class="icon32"><use href="#tree"/></svg></button>
        <button aria-label="Pohledy"><svg class="icon32"><use href="#view"/></svg></button>
        <button aria-label="Scéna"><svg class="icon32"><use href="#scene"/></svg></button>
        <button aria-label="Role"><svg class="icon32"><use href="#user"/></svg></button>
      </div>
      <form class="panel">
        <div class="actions">
          <button type="button" aria-label="OK"><svg class="icon"><use href="#ok"/></svg></button>
          <button type="button" aria-label="Storno"><svg class="icon"><use href="#cancel"/></svg></button>
          <button type="button" aria-label="Použít"><svg class="icon"><use href="#apply"/></svg></button>
          <button type="button" class="push">F</button>
          <button type="button" aria-label="Informace"><svg class="icon"><use href="#info"/></svg></button>
          <button type="button" class="narrow" aria-label="Rozbalit"><svg class="iconn"><use href="#expand"/></svg></button>
        </div>
        <fieldset class="box">
          <h2><i class="tri"></i>Požadováno</h2>
          <div class="modes">
            <button type="button" aria-label="Dynamický"><svg><use href="#mvA"/></svg></button>
            <button type="button" class="on" aria-label="Bod do bodu"><svg><use href="#mvB"/></svg></button>
            <button type="button" aria-label="Směr"><svg><use href="#mvC"/></svg></button>
            <button type="button" aria-label="Rotace"><svg><use href="#mvD"/></svg></button>
            <button type="button" aria-label="Rám"><svg><use href="#mvE"/></svg></button>
            <button type="button" aria-label="Dráha"><svg><use href="#mvF"/></svg></button>
          </div>
          <div class="row"><label for="ent">Entita</label><input id="ent" class="wide" value="32 vybráno"><svg class="chev"><use href="#chev"/></svg></div>
          <div class="row"><label for="zb">Z bodu</label><input id="zb" class="focus"><svg class="chev"><use href="#chev"/></svg></div>
          <div class="row"><label for="db">Do bodu</label><input id="db"><svg class="chev"><use href="#chev"/></svg></div>
        </fieldset>
        <fieldset class="box">
          <h2><i class="tri"></i>Orientace</h2>
          <div class="row"><label for="zv">Z vektoru</label><input id="zv"><svg class="chev"><use href="#chev"/></svg></div>
          <div class="row"><label for="dv">Do vektoru</label><input id="dv"><svg class="chev"><use href="#chev"/></svg></div>
        </fieldset>
      </form>
    </div>
  </aside>

  <section class="doc">
    <div class="doctabs">
      <div class="doctab">* Díl002.Z3PRT <button aria-label="Zavřít"><svg class="mini" viewBox="0 0 12 12"><path d="M1 1l10 10M11 1L1 11" stroke="#7d6a38" stroke-width="2.500"/></svg></button></div>
      <button class="add" aria-label="Nová karta"><svg class="mini" viewBox="0 0 12 12"><path d="M6 0v12M0 6h12" stroke="#aaa3a3" stroke-width="2.200"/></svg></button>
      <svg class="mini more" viewBox="0 0 10 10"><path d="M0 1h10" stroke="#8d8585" stroke-width="2"/><path d="M0 5h10L5 10z" fill="#8d8585"/></svg>
    </div>
    <div class="canvas">
      <p>&lt;F8&gt; nebo &lt;Shift-roll&gt; pro nalezení dalšího platného nastavení filtru.</p>
      <p>&lt;pravý-klik&gt; pro volby zadání bodu.</p>
      <div class="viewbar">
        <button aria-label="Ukončit"><svg class="icon"><use href="#exit"/></svg></button>
        <button aria-label="Kniha"><svg class="icon"><use href="#book"/></svg></button><i class="dd"></i>
        <button aria-label="Štětec"><svg class="icon"><use href="#brush"/></svg></button>
        <button aria-label="Rovina"><svg class="icon"><use href="#plane"/></svg></button>
        <button aria-label="Stínovaný"><svg class="icon"><use href="#cube"/></svg></button><i class="dd"></i>
        <button aria-label="Drátový"><svg class="icon"><use href="#wire"/></svg></button><i class="dd"></i>
        <button aria-label="Síť"><svg class="icon"><use href="#mesh"/></svg></button><i class="dd"></i>
        <button aria-label="Přizpůsobit"><svg class="icon"><use href="#fit"/></svg></button><i class="dd"></i>
        <button aria-label="Cíl"><svg class="icon"><use href="#target"/></svg></button><i class="dd"></i>
        <button aria-label="Okno"><svg class="icon"><use href="#window"/></svg></button>
        <button aria-label="Kóty"><svg class="icon"><use href="#dim"/></svg></button><i class="dd"></i>
        <button aria-label="Displej"><svg class="icon"><use href="#monitor"/></svg></button><i class="dd"></i>
        <button aria-label="Barva hran"><span class="swatch black"></span></button>
        <button aria-label="Barva ploch"><span class="swatch sky"></span></button>
        <button aria-label="Hladiny"><svg class="icon"><use href="#layers"/></svg></button><i class="dd"></i>
        <label class="combo layer off"><svg class="lamp"><use href="#bulb"/></svg><span class="ball"></span><select aria-label="Hladina" disabled><option>Hladina0000</option></select></label>
      </div>
      <svg class="model" viewBox="0 0 1020 600" role="img" aria-label="Model krabice">
        <path d="M92 38L862 68 967 188 932 488 165 460 58 335z" fill="#8fabb7"/>
        <path d="M92 38L200 158 168 458 58 335z" fill="#71868e"/>
        <path d="M858 75L962 188 840 183z" fill="#71868e"/>
        <g stroke="#c9a057" fill="none" stroke-linejoin="round">
          <path d="M64 337L822 364" stroke-width="26" opacity=".8"/><path d="M64 328l758 26M64 346l758 26" stroke="#dca040" stroke-width="3"/>
          <path d="M848 190l-20 175L920 470" stroke-width="22" opacity=".75"/><path d="M840 190l-20 175 92 105M856 190l-20 175 92 105" stroke="#dca040" stroke-width="3"/>
          <path d="M102 60L68 325M75 340l92 100" stroke-width="10"/>
        </g>
        <g stroke="#dd9f38" fill="none" stroke-width="9"><circle cx="192" cy="190" r="26"/><circle cx="462" cy="202" r="26"/><circle cx="743" cy="211" r="26"/><ellipse cx="496" cy="409" rx="72" ry="23" transform="rotate(4 496 409)" stroke="#c9a057" stroke-width="13"/><ellipse cx="496" cy="409" rx="78" ry="30" transform="rotate(4 496 409)" stroke-width="3"/><ellipse cx="137" cy="244" rx="9" ry="26"/><ellipse cx="893" cy="274" rx="12" ry="26" fill="#bc9d62"/></g>
        <rect x="113" y="214" width="24" height="62" rx="11" fill="#ff9b00"/>
        <g stroke="#ff9b00" fill="none" stroke-linejoin="round" stroke-linecap="round">
          <path d="M94 41L862 70 964 188 928 484 170 456 60 334z" stroke-width="12"/>
          <path d="M96 44L200 158" stroke-width="16"/><path d="M200 161L960 187" stroke-width="13"/>
          <path d="M200 165L172 450" stroke-width="21"/><path d="M172 455L924 483" stroke-width="19"/><path d="M958 195l-30 284" stroke-width="18"/><path d="M854 76l-12 104" stroke-width="11"/>
          <circle cx="295" cy="311" r="26" stroke-width="11"/><circle cx="565" cy="321" r="26" stroke-width="11"/><circle cx="846" cy="330" r="26" stroke-width="11" fill="#71868e"/>
        </g>
        <ellipse cx="555" cy="471" rx="24" ry="27" fill="none" stroke="#ed1c24" stroke-width="8"/>
        <text x="555" y="558" class="mark">2</text>
      </svg>
    </div>
    <div class="status"></div>
  </section>

  <div class="popup" role="menu">
    <button role="menuitem"><svg class="icon"><use href="#mArrow"/></svg>Vyberte si ze seznamu</button>
    <hr>
    <button role="menuitem"><span class="checked"><svg class="icon"><use href="#mCheck"/></svg></span>absolutní</button>
    <button role="menuitem"><span class="icon"></span>Kritický</button>
    <button role="menuitem"><span class="icon"></span>relativní</button>
    <button role="menuitem"><span class="icon"></span>na entitu</button>
    <hr>
    <button role="menuitem"><svg class="icon"><use href="#mPi"/></svg>výraz</button>
    <hr>
    <button role="menuitem"><svg class="icon"><use href="#refpt"/></svg>Chytrý Ref bod</button>
    <hr>
    <button role="menuitem"><svg class="icon"><use href="#mBolt"/></svg>Dynamický výběr</button>
    <button role="menuitem" class="hot"><svg class="icon"><use href="#mMid"/></svg>Střední<span class="frame"></span><span class="one">1</span></button>
    <button role="menuitem"><svg class="icon"><use href="#mBetween"/></svg>Mezi</button>
    <button role="menuitem"><svg class="icon"><use href="#mOffset"/></svg>Odsazení</button>
    <button role="menuitem"><svg class="icon"><use href="#mDist"/></svg>Vzdálenost odsazení</button>
    <button role="menuitem"><svg class="icon"><use href="#mAlong"/></svg>Podél</button>
    <button role="menuitem"><svg class="icon"><use href="#mAngle"/></svg>Úhel</button>
    <button role="menuitem"><svg class="icon"><use href="#mCenter"/></svg>Střed křivosti</button>
    <button role="menuitem"><svg class="icon"><use href="#mQuad"/></svg>Kvadrant křivosti</button>
    <button role="menuitem"><svg class="icon"><use href="#mTwo"/></svg>Ze 2 úseček</button>
    <button role="menuitem"><svg class="icon"><use href="#mInt"/></svg>Průsečník</button>
    <button role="menuitem"><svg class="icon"><use href="#mProj"/></svg>Promítnutý průsečník Kř-Kř</button>
    <button role="menuitem"><svg class="icon"><use href="#mCrv"/></svg>Mezi body Kř</button>
    <button role="menuitem"><svg class="icon"><use href="#mProjOn"/></svg>Promít.na Kř.nebo Pl.</button>
    <button role="menuitem"><svg class="icon"><use href="#mPl"/></svg>Kř-Pl Průsečník</button>
  </div>
</main>
</body>
</html>
```

FILE: styles.css
```css
* { box-sizing: border-box; }
html, body { height: 100%; }
body {
  margin: 0;
  display: flex;
  flex-direction: column;
  overflow: hidden;
  background: #e1e5e8;
  color: #222;
  font: 14px/20px "Noto Sans", "Open Sans", sans-serif;
}
button {
  font: inherit;
  color: inherit;
  background: none;
  border: 0;
  padding: 0;
  margin: 0;
  white-space: nowrap;
}
.sprite { position: absolute; width: 0; height: 0; }
.icon { width: 20px; height: 20px; flex: none; display: block; }
.mini { width: 12px; height: 12px; display: block; }
.sep { width: 1px; height: 20px; background: #c3c7cb; flex: none; }
.dd {
  flex: none;
  border: 4px solid transparent;
  border-top: 4px solid #444;
  border-bottom: 0;
}

/* title bar */
.titlebar { display: flex; align-items: center; height: 32px; flex: none; }
.quick { display: flex; align-items: center; width: 295px; flex: none; }
.quick button { width: 28px; display: grid; place-items: center; flex: none; }
.quick .slim { width: 18px; }
.quick .logo { margin: 0 3px 0 2px; }
.quick .sep { height: 12px; margin-right: 7px; background: #999; }
.menubar { display: flex; flex: none; gap: 2px; }
.menubar button { padding: 0 8px; color: #000; }
.caption { margin-left: auto; color: #444; white-space: nowrap; }

/* ribbon tabs */
.tabs {
  display: flex;
  gap: 1px;
  flex: none;
  height: 28px;
  border-bottom: 1px solid #b6bcc6;
  overflow: hidden;
  color: #444;
}
.tabs button { flex: none; height: 28px; padding: 0 10px; border-right: 1px solid transparent; }
.tabs .file { width: 89px; height: 27px; margin: 0 3px 0 0; background: #2a5fb5; color: #fff; border: 1px solid #1a4fae; }
.tabs .active { background: #fcfcfc; border: 1px solid #b6bcc6; border-bottom: 0; padding: 0 8px; }

/* ribbon */
.ribbon {
  display: flex;
  flex: none;
  height: 119px;
  background: #fcfcfc;
  border-bottom: 1px solid #b6bcc6;
  overflow: hidden;
}
.group { flex: none; padding: 5px 0 4px; border-right: 1px solid #ccd0d6; }
.cols { display: grid; height: 87px; padding-left: 8px; }
.col { display: flex; flex-direction: column; align-items: flex-start; }
.col button { display: flex; align-items: center; gap: 4px; height: 29px; }
.col .dd { margin-left: 4px; }
.g1 { width: 287px; }
.g2 { width: 338px; }
.g3 { width: 499px; }
.g4 { width: 359px; }
.g5 { border: 0; }
.g1 .cols { grid-template-columns: 94px 1fr; padding-left: 10px; }
.g2 .cols { grid-template-columns: 108px 95px 1fr; }
.g3 .cols { grid-template-columns: 167px 126px 1fr; }
.g4 .cols { grid-template-columns: 170px 1fr; }
.glabel { display: flex; justify-content: center; height: 24px; align-items: center; color: #6d7480; }
.g3 .glabel span { flex: 1; text-align: center; }
.launch { width: 20px; }

/* selection toolbar */
.toolbar { display: flex; align-items: center; flex: none; height: 34px; padding-top: 2px; overflow: hidden; }
.toolbar button { width: 28px; height: 26px; display: grid; place-items: center; flex: none; }
.toolbar .on { background: #ffe174; border: 1px solid #c9983a; width: 27px; }
.toolbar .sep { margin: 0 4px; }
.tight { margin: 0 4px 0 2px; }
.grip { width: 3px; height: 20px; margin: 0 5px 0 1px; border-left: 2px dotted #858b98; flex: none; }
.combo { position: relative; display: flex; align-items: center; flex: none; height: 26px; background: #fff; border: 1px solid #b9bec6; }
.combo::after {
  content: "";
  position: absolute;
  right: 6px;
  top: 10px;
  border: 4px solid transparent;
  border-top-color: #333;
  border-bottom: 0;
}
.combo select { appearance: none; border: 0; background: none; font: inherit; color: #111; width: 100%; height: 24px; padding: 0 3px; opacity: 1; }
.combo.off { background: #edeeef; border-color: #d3d7dc; }
.combo.off::after { border-top-color: #aaa; }
.combo.off select { color: #777; }
.c1 { width: 120px; margin: 0 2px 0 1px; }
.c2 { width: 165px; }
.c3 { width: 120px; }

/* docked pane */
.work { flex: 1; display: flex; min-height: 0; position: relative; }
.dock { width: 446px; flex: none; display: flex; flex-direction: column; }
.dockhead { display: flex; align-items: center; gap: 10px; height: 27px; padding: 0 10px 0 2px; border-bottom: 1px solid #b9bec6; color: #333; }
.dockhead span { flex: 1; }
.hicon { width: 14px; height: 14px; }
.dockbody { flex: 1; display: flex; min-height: 0; }
.rail { width: 36px; display: flex; flex-direction: column; flex: none; }
.rail button { height: 60px; display: grid; place-items: center; padding-right: 2px; }
.rail .sel { height: 58px; background: #fcfcfc; border-bottom: 1px solid #b9bec6; }
.icon32 { width: 30px; height: 30px; }
.panel { flex: 1; margin: 0 1px 4px 0; padding: 3px 6px 0 5px; background: #dde1e9; border: 1px solid #b9bec6; border-top: 0; box-shadow: inset 0 0 0 3px #e1e5e8; }
.actions { display: flex; gap: 3px; margin: 0 -2px 4px; }
.actions button { width: 32px; height: 29px; background: #fdfdfd; border: 1px solid #b9bec6; display: grid; place-items: center; flex: none; color: #111; }
.actions .push { margin-left: auto; }
.actions .narrow { width: 16px; }
.iconn { width: 12px; height: 20px; }
.box { margin: 0 0 2px; padding: 0 0 2px; border: 1px solid #b9bec6; min-width: 0; }
.box h2 { display: flex; align-items: center; gap: 6px; height: 29px; margin: 0 0 3px; padding-left: 5px; background: #fcfcfc; border-bottom: 1px solid #b9bec6; font-size: 14px; line-height: 20px; color: #333; }
.tri { border: 5px solid transparent; border-top: 10px solid #4b4f58; border-bottom: 0; }
.modes { display: flex; gap: 1px; justify-content: center; margin: 0 2px 2px 0; padding-top: 1px; }
.modes button { width: 45px; height: 45px; background: #fdfdfd; border: 1px solid #b9bec6; display: grid; place-items: center; }
.modes .on { background: #ffe174; border-color: #c9983a; }
.modes svg { width: 39px; height: 39px; }
.row { display: grid; grid-template-columns: 128px auto 1fr; align-items: center; height: 31px; padding-left: 8px; color: #111; }
.row input { width: 178px; height: 27px; border: 1px solid #b9bec6; background: #fff; padding: 0 3px; font: inherit; color: #111; outline: 0; }
.row .wide { width: 193px; }
.row .focus { border-color: #0b84ee; box-shadow: 0 0 0 1px #9ecbf5; }
.chev { width: 12px; height: 15px; margin-left: 9px; }

/* document area */
.doc { flex: 1; min-width: 0; display: flex; flex-direction: column; }
.doctabs { display: flex; align-items: center; height: 27px; border-bottom: 1px solid #b9bec6; padding-right: 4px; flex: none; }
.doctab { display: flex; align-items: center; justify-content: center; gap: 8px; width: 175px; height: 27px; margin-left: 1px; padding-left: 20px; background: #fcfcfc; border: 1px solid #b9bec6; border-bottom: 0; color: #111; white-space: nowrap; }
.add { margin-left: 8px; }
.more { margin-left: auto; width: 11px; }
.canvas { flex: 1; position: relative; overflow: hidden; background: linear-gradient(#fff, #9f9f9f); padding: 0 22px; color: #000; }
.canvas p { margin: 0; padding: 2px 0; height: 26px; line-height: 20px; white-space: nowrap; }
.viewbar { position: absolute; left: 171px; top: 2px; display: flex; align-items: center; height: 26px; }
.viewbar button { width: 29px; display: grid; place-items: center; }
.viewbar .dd { margin: 0 4px 0 3px; }
.swatch { width: 20px; height: 20px; border: 1px solid #111; background: #bfe7f6; }
.swatch.black { height: 11px; background: #000; border-color: #555; }
.layer { width: 144px; padding-left: 8px; }
.lamp { width: 14px; height: 16px; flex: none; }
.ball { width: 13px; height: 13px; margin: 0 4px; border: 1px solid #999; border-radius: 50%; background: #e0e0e0; flex: none; }
.layer select { width: 82px; }
.model { position: absolute; left: 434px; top: 240px; width: 340px; height: 200px; }
.mark { font: 66px "Liberation Sans", Arial, sans-serif; fill: #ed1c24; text-anchor: middle; }
.status { height: 6px; flex: none; border-top: 1px solid #f2f4f5; box-shadow: inset 0 1px #b9bec6; }

/* context menu */
.popup {
  position: absolute;
  left: 386px;
  top: 127px;
  width: 253px;
  padding: 2px 0;
  display: flex;
  flex-direction: column;
  background: linear-gradient(90deg, #fff 32px, #dfe2e5 32px, #dfe2e5 33px, #fff 33px);
  border: 1px solid #e3e4e6;
  box-shadow: 3px 5px 2px #666;
  color: #555b63;
}
.popup button { position: relative; display: flex; align-items: center; gap: 11px; height: 28px; padding-left: 6px; flex: none; text-align: left; }
.popup hr { width: 214px; height: 1px; margin: 2px 4px 6px auto; border: 0; background: #a0a0a0; flex: none; }
.popup .checked { width: 24px; height: 24px; margin: 0 -2px; border: 1px solid #f0a040; background: #fdf0c0; display: grid; place-items: center; }
.popup .hot { background: #fff0b8; }
.frame { position: absolute; left: -3px; right: -2px; top: -3px; bottom: -2px; border: 3px solid #ed1c24; }
.one { position: absolute; left: 261px; top: 2px; font: 22px/24px "Liberation Sans", Arial, sans-serif; color: #ed1c24; }
```
